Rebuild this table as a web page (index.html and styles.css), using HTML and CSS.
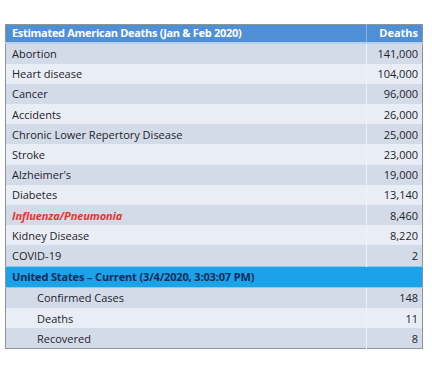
FILE: index.html
```html
<!DOCTYPE html>
<html>
<head>
<meta charset="utf-8">
<link rel="stylesheet" href="styles.css">
</head>
<body>
<div class="page">
<table class="deaths">
  <thead>
    <tr class="head"><th class="name">Estimated American Deaths (Jan &amp; Feb 2020)</th><th class="num">Deaths</th></tr>
  </thead>
  <tbody>
    <tr class="dark"><td class="name">Abortion</td><td class="num">141,000</td></tr>
    <tr class="light"><td class="name">Heart disease</td><td class="num">104,000</td></tr>
    <tr class="dark"><td class="name">Cancer</td><td class="num">96,000</td></tr>
    <tr class="light"><td class="name">Accidents</td><td class="num">26,000</td></tr>
    <tr class="dark"><td class="name">Chronic Lower Repertory Disease</td><td class="num">25,000</td></tr>
    <tr class="light"><td class="name">Stroke</td><td class="num">23,000</td></tr>
    <tr class="dark"><td class="name">Alzheimer's</td><td class="num">19,000</td></tr>
    <tr class="light"><td class="name">Diabetes</td><td class="num">13,140</td></tr>
    <tr class="dark"><td class="name flu">Influenza/Pneumonia</td><td class="num">8,460</td></tr>
    <tr class="light"><td class="name">Kidney Disease</td><td class="num">8,220</td></tr>
    <tr class="dark"><td class="name">COVID-19</td><td class="num">2</td></tr>
    <tr class="current"><td class="name" colspan="2">United States – Current (3/4/2020, 3:03:07 PM)</td></tr>
    <tr class="dark"><td class="name sub">Confirmed Cases</td><td class="num">148</td></tr>
    <tr class="light"><td class="name sub">Deaths</td><td class="num">11</td></tr>
    <tr class="dark"><td class="name sub">Recovered</td><td class="num">8</td></tr>
  </tbody>
</table>
</div>
</body>
</html>
```

FILE: styles.css
```css
html, body {
  margin: 0;
  padding: 0;
  background: #ffffff;
}

.page {
  padding: 24px 0 0 5px;
}

.deaths {
  width: 418px;
  border-collapse: collapse;
  border: 1px solid #8f9296;
  font-family: "Open Sans", "Liberation Sans", sans-serif;
  font-size: 11px;
  color: #1f232a;
  table-layout: fixed;
}

.deaths td, .deaths th {
  height: 20.2px;
  padding: 0;
  line-height: 19px;
  white-space: nowrap;
}

.deaths .name {
  text-align: left;
  padding-left: 6px;
}

.deaths .num {
  width: 51px;
  text-align: right;
  padding-right: 4px;
  border-left: 1px solid #eef2f8;
}

.head th {
  height: 16.5px;
  line-height: 16px;
  background: #4f8fd6;
  color: #ffffff;
  font-weight: 700;
  letter-spacing: -0.3px;
  border-bottom: 2px solid #b4d0f0;
}

.head th.num {
  border-left: 1px solid #8db6e6;
  letter-spacing: 0;
}

.dark td {
  background: #d4dbe8;
}

.light td {
  background: #e9edf5;
}

.deaths .flu {
  color: #e8352c;
  font-style: italic;
  font-weight: 700;
  letter-spacing: -0.1px;
}

.deaths .sub {
  padding-left: 31px;
}

.current td {
  background: #1ca2e8;
  color: #0e2b5c;
  font-weight: 700;
  letter-spacing: -0.15px;
  border-top: 1px solid #7fd0f5;
  border-bottom: 1px solid #7fd0f5;
}
```
